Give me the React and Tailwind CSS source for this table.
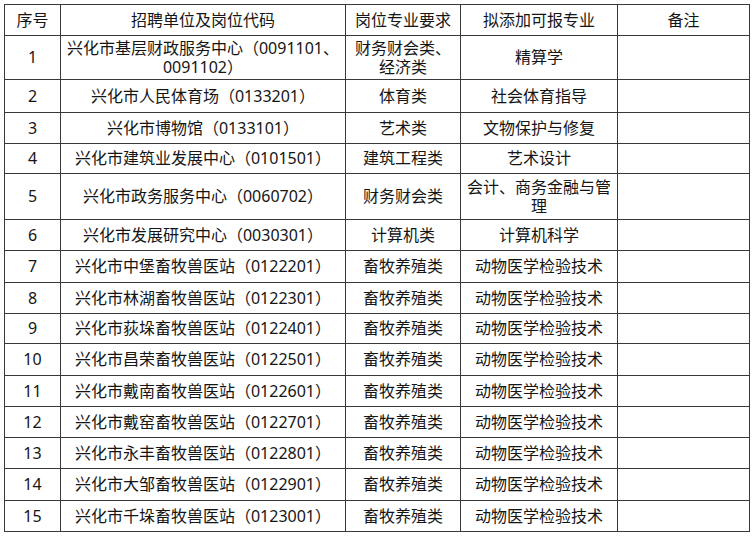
import React from 'react';

const rows = [
  ['1', ['兴化市基层财政服务中心（0091101、', '0091102）'], ['财务财会类、', '经济类'], ['精算学']],
  ['2', ['兴化市人民体育场（0133201）'], ['体育类'], ['社会体育指导']],
  ['3', ['兴化市博物馆（0133101）'], ['艺术类'], ['文物保护与修复']],
  ['4', ['兴化市建筑业发展中心（0101501）'], ['建筑工程类'], ['艺术设计']],
  ['5', ['兴化市政务服务中心（0060702）'], ['财务财会类'], ['会计、商务金融与管', '理']],
  ['6', ['兴化市发展研究中心（0030301）'], ['计算机类'], ['计算机科学']],
  ['7', ['兴化市中堡畜牧兽医站（0122201）'], ['畜牧养殖类'], ['动物医学检验技术']],
  ['8', ['兴化市林湖畜牧兽医站（0122301）'], ['畜牧养殖类'], ['动物医学检验技术']],
  ['9', ['兴化市荻垛畜牧兽医站（0122401）'], ['畜牧养殖类'], ['动物医学检验技术']],
  ['10', ['兴化市昌荣畜牧兽医站（0122501）'], ['畜牧养殖类'], ['动物医学检验技术']],
  ['11', ['兴化市戴南畜牧兽医站（0122601）'], ['畜牧养殖类'], ['动物医学检验技术']],
  ['12', ['兴化市戴窑畜牧兽医站（0122701）'], ['畜牧养殖类'], ['动物医学检验技术']],
  ['13', ['兴化市永丰畜牧兽医站（0122801）'], ['畜牧养殖类'], ['动物医学检验技术']],
  ['14', ['兴化市大邹畜牧兽医站（0122901）'], ['畜牧养殖类'], ['动物医学检验技术']],
  ['15', ['兴化市千垛畜牧兽医站（0123001）'], ['畜牧养殖类'], ['动物医学检验技术']],
];

const Cell = ({ lines }) => (
  <div className="flex flex-col items-center justify-center border-r border-b border-[#383838] text-center leading-[19px]">
    {lines.map((l, i) => (
      <span key={i} className="whitespace-nowrap">{l}</span>
    ))}
  </div>
);

export default function App() {
  return (
    <div className="bg-white w-[753px] h-[537px] pl-[4px] pt-[4px] text-[16px] text-[#151515] font-['Noto_Sans','Noto_Sans_CJK_SC',sans-serif]">
      <div className="grid w-[746px] grid-cols-[56px_285px_115px_157px_132px] grid-rows-[31px_44px_33px_31px_30px_46px_31px_32px_31px_30px_32px_31px_31px_31px_32px_31px] border-l border-t border-[#383838]">
        <Cell lines={['序号']} />
        <Cell lines={['招聘单位及岗位代码']} />
        <Cell lines={['岗位专业要求']} />
        <Cell lines={['拟添加可报专业']} />
        <Cell lines={['备注']} />
        {rows.map(([n, unit, req, add]) => (
          <React.Fragment key={n}>
            <Cell lines={[n]} />
            <Cell lines={unit} />
            <Cell lines={req} />
            <Cell lines={add} />
            <Cell lines={['']} />
          </React.Fragment>
        ))}
      </div>
    </div>
  );
}
